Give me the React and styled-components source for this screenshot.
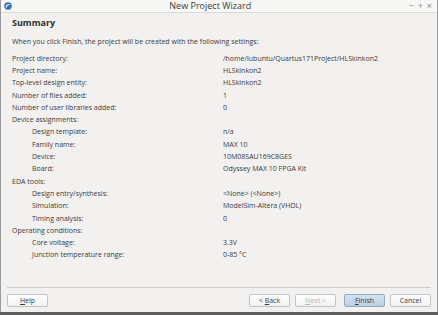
import React from "react";
import styled, { createGlobalStyle } from "styled-components";

const GlobalStyle = createGlobalStyle`
  html, body { margin: 0; padding: 0; background: #5f5f5f; }
  body { width: 438px; height: 315px; overflow: hidden; }
`;

const Window = styled.div`
  width: 438px;
  height: 312px;
  box-sizing: border-box;
  border-left: 1px solid #9a9a9a;
  border-right: 1px solid #9a9a9a;
  background: #f2f1f0;
  display: flex;
  flex-direction: column;
  font-family: "Open Sans", "Noto Sans", sans-serif;
  color: #3a3a3a;
`;

const TitleBar = styled.div`
  height: 12px;
  flex: 0 0 auto;
  display: flex;
  align-items: center;
  padding: 0 5px 0 3px;
  background: #f7f7f6;
  border-bottom: 1px solid #dcdbda;
`;

const Title = styled.div`
  flex: 1;
  text-align: center;
  font-size: 9px;
  color: #3c3c3c;
  line-height: 12px;
`;

const Controls = styled.div`
  display: flex;
  gap: 4px;
  color: #8a8a8a;
  font-size: 9px;
  line-height: 12px;
`;

const Body = styled.div`
  flex: 1;
  padding: 0 6px 0 11px;
  display: flex;
  flex-direction: column;
`;

const Heading = styled.div`
  font-weight: bold;
  font-size: 9px;
  color: #2e2e2e;
  margin-top: 4px;
  line-height: 12px;
`;

const Intro = styled.div`
  font-size: 7px;
  margin-top: 7px;
  line-height: 11px;
`;

const Rows = styled.div`
  margin-top: 5px;
  display: grid;
  grid-template-columns: 211px 1fr;
  grid-auto-rows: 12.3px;
  font-size: 7px;
  align-items: center;
`;

const Label = styled.div`
  padding-left: ${(p) => (p.$indent ? "20px" : "0")};
  white-space: nowrap;
`;

const Value = styled.div`
  white-space: nowrap;
`;

const Footer = styled.div`
  margin-top: auto;
  border-top: 1px solid #cfcecd;
  margin-left: -5px;
  margin-bottom: 5px;
  padding-top: 6px;
  display: flex;
  align-items: center;
`;

const Button = styled.button`
  height: 13px;
  width: 41px;
  box-sizing: border-box;
  margin: 0 0 0 ${(p) => p.$gap || 0}px;
  padding: 0;
  font-family: inherit;
  font-size: 7px;
  line-height: 11px;
  border: 1px solid ${(p) => (p.$primary ? "#94a9c2" : "#c4c3c2")};
  border-radius: 2px;
  background: ${(p) =>
    p.$primary
      ? "linear-gradient(#d3e1ef, #bccfe3)"
      : "linear-gradient(#ffffff, #f2f2f1)"};
  color: ${(p) => (p.$disabled ? "#b4b4b4" : "#3a3a3a")};
  u { text-decoration-thickness: 0.5px; }
`;

const Spacer = styled.div`
  flex: 1;
`;

const Globe = () => (
  <svg width="8" height="8" viewBox="0 0 16 16">
    <circle cx="8" cy="8" r="7.5" fill="#2f73b8" />
    <path d="M3 10 C5 4, 10 3, 13 5 C10 5, 6 7, 5 12 Z" fill="#e8f2fb" />
  </svg>
);

const rows = [
  ["Project directory:", "/home/lubuntu/Quartus171Project/HLSkinkon2"],
  ["Project name:", "HLSkinkon2"],
  ["Top-level design entity:", "HLSkinkon2"],
  ["Number of files added:", "1"],
  ["Number of user libraries added:", "0"],
  ["Device assignments:", ""],
  ["Design template:", "n/a", true],
  ["Family name:", "MAX 10", true],
  ["Device:", "10M08SAU169C8GES", true],
  ["Board:", "Odyssey MAX 10 FPGA Kit", true],
  ["EDA tools:", ""],
  ["Design entry/synthesis:", "<None> (<None>)", true],
  ["Simulation:", "ModelSim-Altera (VHDL)", true],
  ["Timing analysis:", "0", true],
  ["Operating conditions:", ""],
  ["Core voltage:", "3.3V", true],
  ["Junction temperature range:", "0-85 \u00b0C", true],
];

const App = () => (
  <>
    <GlobalStyle />
    <Window>
      <TitleBar>
        <Globe />
        <Title>New Project Wizard</Title>
        <Controls>
          <span>&minus;</span>
          <span>+</span>
          <span>&times;</span>
        </Controls>
      </TitleBar>
      <Body>
        <Heading>Summary</Heading>
        <Intro>When you click Finish, the project will be created with the following settings:</Intro>
        <Rows>
          {rows.map(([label, value, indent], i) => (
            <React.Fragment key={i}>
              <Label $indent={indent}>{label}</Label>
              <Value>{value}</Value>
            </React.Fragment>
          ))}
        </Rows>
        <Footer>
          <Button><u>H</u>elp</Button>
          <Spacer />
          <Button>&lt; <u>B</u>ack</Button>
          <Button $gap={5} $disabled><u>N</u>ext &gt;</Button>
          <Button $gap={8} $primary><u>F</u>inish</Button>
          <Button $gap={5}>Cancel</Button>
        </Footer>
      </Body>
    </Window>
  </>
);

export default App;
